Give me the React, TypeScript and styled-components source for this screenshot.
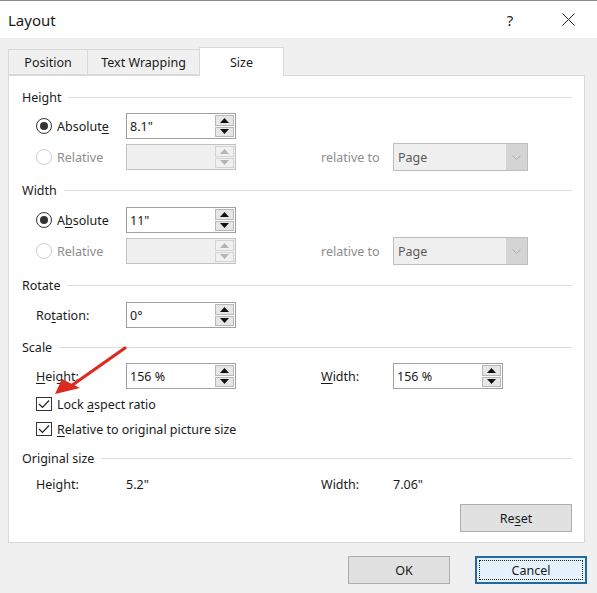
import React from "react";
import styled, { createGlobalStyle } from "styled-components";

const Global = createGlobalStyle`
  html, body { margin: 0; padding: 0; background: #f0f0f0; }
  body { font-family: "Noto Sans", "Open Sans", sans-serif; font-size: 12.5px; color: #1a1a1a; }
  * { box-sizing: border-box; }
`;

const Dialog = styled.div`
  width: 597px;
  height: 593px;
  display: flex;
  flex-direction: column;
  background: #f0f0f0;
  position: relative;
  overflow: hidden;
  border-top: 1px solid #8a8a8a;
`;

const TitleBar = styled.div`
  height: 37px;
  background: #ffffff;
  display: flex;
  align-items: center;
  padding-left: 8px;
`;

const Title = styled.div`
  flex: 1;
  font-size: 15px;
  color: #1a1a1a;
`;

const TitleBtn = styled.div`
  width: 58px;
  height: 37px;
  display: flex;
  align-items: center;
  justify-content: center;
  font-size: 15px;
  color: #222;
`;

const Body = styled.div`
  padding: 9px 12px 0 8px;
  display: flex;
  flex-direction: column;
`;

const TabRow = styled.div`
  display: flex;
  align-items: flex-end;
  height: 28px;
  padding-left: 1px;
`;

const Tab = styled.div<{ $w: number; $active?: boolean }>`
  width: ${(p) => p.$w}px;
  height: ${(p) => (p.$active ? 29 : 26)}px;
  margin-bottom: ${(p) => (p.$active ? -1 : 0)}px;
  background: ${(p) => (p.$active ? "#ffffff" : "#f0f0f0")};
  border: 1px solid #d9d9d9;
  border-bottom: ${(p) => (p.$active ? "none" : "1px solid #d9d9d9")};
  margin-left: -1px;
  display: flex;
  align-items: center;
  justify-content: center;
  font-size: 12.5px;
  color: #1a1a1a;
  position: relative;
  z-index: ${(p) => (p.$active ? 2 : 1)};
`;

const Panel = styled.div`
  position: relative;
  width: 577px;
  height: 468px;
  background: #ffffff;
  border: 1px solid #d9d9d9;
  padding: 11px 12px 0 13px;
  display: flex;
  flex-direction: column;
`;

const Header = styled.div<{ $mt: number }>`
  display: flex;
  align-items: center;
  height: 20px;
  margin-top: ${(p) => p.$mt}px;
  font-size: 12.5px;
  color: #1a1a1a;
  &::after {
    content: "";
    flex: 1;
    height: 1px;
    background: #dcdcdc;
    margin-left: 7px;
  }
`;

const Row = styled.div<{ $mt: number; $h?: number }>`
  display: grid;
  grid-template-columns: 90px 110px 85px 72px 135px;
  align-items: center;
  height: ${(p) => p.$h ?? 28}px;
  margin-top: ${(p) => p.$mt}px;
  padding-left: 14px;
`;

const Label = styled.span<{ $disabled?: boolean }>`
  color: ${(p) => (p.$disabled ? "#8c8c8c" : "#1a1a1a")};
  font-size: 12.5px;
  white-space: nowrap;
`;

const U = styled.span`
  text-decoration: underline;
  text-underline-offset: 2px;
`;

const RadioWrap = styled.div`
  display: flex;
  align-items: center;
  gap: 5px;
`;

const RadioCircle = styled.span<{ $checked?: boolean; $disabled?: boolean }>`
  width: 16px;
  height: 16px;
  border-radius: 50%;
  border: 1px solid ${(p) => (p.$disabled ? "#cfcfcf" : "#333")};
  display: flex;
  align-items: center;
  justify-content: center;
  background: #fff;
  &::after {
    content: "";
    display: ${(p) => (p.$checked ? "block" : "none")};
    width: 8px;
    height: 8px;
    border-radius: 50%;
    background: #333;
  }
`;

const SpinBox = styled.div<{ $disabled?: boolean }>`
  width: 110px;
  height: 26px;
  border: 1px solid ${(p) => (p.$disabled ? "#c2c2c2" : "#a0a0a0")};
  background: ${(p) => (p.$disabled ? "#f0f0f0" : "#ffffff")};
  display: flex;
  align-items: stretch;
`;

const SpinValue = styled.div`
  flex: 1;
  display: flex;
  align-items: center;
  padding-left: 3px;
  font-size: 12.5px;
  color: #1a1a1a;
`;

const SpinCol = styled.div`
  width: 20px;
  display: flex;
  flex-direction: column;
  gap: 1px;
  padding: 1px 1px 1px 0;
`;

const SpinBtn = styled.div<{ $disabled?: boolean }>`
  flex: 1;
  background: ${(p) => (p.$disabled ? "#f0f0f0" : "#e6e6e6")};
  border: 1px solid ${(p) => (p.$disabled ? "#d4d4d4" : "#b8b8b8")};
  display: flex;
  align-items: center;
  justify-content: center;
`;

const Select = styled.div`
  width: 135px;
  height: 28px;
  border: 1px solid #bdbdbd;
  background: #f0eff0;
  display: flex;
  align-items: stretch;
`;

const SelectValue = styled.div`
  flex: 1;
  display: flex;
  align-items: center;
  padding-left: 4px;
  color: #5a5a5a;
  font-size: 12.5px;
`;

const SelectBtn = styled.div`
  width: 21px;
  background: #d4d4d4;
  display: flex;
  align-items: center;
  justify-content: center;
`;

const CheckRow = styled.div<{ $mt: number }>`
  display: flex;
  align-items: center;
  gap: 5px;
  height: 20px;
  margin-top: ${(p) => p.$mt}px;
  padding-left: 14px;
`;

const CheckBox = styled.span`
  width: 16px;
  height: 14px;
  border: 1px solid #333;
  background: #fff;
  display: flex;
  align-items: center;
  justify-content: center;
`;

const Value = styled.span`
  font-size: 12.5px;
  color: #1a1a1a;
`;

const ResetRow = styled.div`
  display: flex;
  justify-content: flex-end;
  margin-top: 10px;
`;

const Button = styled.div<{ $w: number; $focus?: boolean; $shift?: number }>`
  width: ${(p) => p.$w}px;
  height: 28px;
  background: ${(p) => (p.$focus ? "#e5f1fb" : "#e1e1e1")};
  border: ${(p) => (p.$focus ? "2px solid #1f6aa5" : "1px solid #adadad")};
  display: flex;
  align-items: center;
  justify-content: center;
  padding-left: ${(p) => p.$shift ?? 0}px;
  font-size: 12.5px;
  color: #1a1a1a;
  position: relative;
`;

const FocusRing = styled.span`
  position: absolute;
  inset: 2px;
  border: 1px dotted #222;
`;

const Footer = styled.div`
  display: flex;
  justify-content: flex-end;
  gap: 25px;
  padding: 13px 10px 0 0;
`;

const ArrowOverlay = styled.svg`
  position: absolute;
  left: 0;
  top: 0;
  pointer-events: none;
`;

const Tri = ({ up, color }: { up: boolean; color: string }) => (
  <svg width="9" height="5" viewBox="0 0 9 5">
    {up ? <polygon points="0,5 9,5 4.5,0" fill={color} /> : <polygon points="0,0 9,0 4.5,5" fill={color} />}
  </svg>
);

const Spin = ({ value, disabled }: { value?: string; disabled?: boolean }) => {
  const c = disabled ? "#b4b4b4" : "#111";
  return (
    <SpinBox $disabled={disabled}>
      <SpinValue>{value}</SpinValue>
      <SpinCol>
        <SpinBtn $disabled={disabled}>
          <Tri up color={c} />
        </SpinBtn>
        <SpinBtn $disabled={disabled}>
          <Tri up={false} color={c} />
        </SpinBtn>
      </SpinCol>
    </SpinBox>
  );
};

const Dropdown = () => (
  <Select>
    <SelectValue>Page</SelectValue>
    <SelectBtn>
      <svg width="9" height="5" viewBox="0 0 9 5">
        <polyline points="0.5,0.5 4.5,4.5 8.5,0.5" fill="none" stroke="#b0b0b0" strokeWidth="1" />
      </svg>
    </SelectBtn>
  </Select>
);

const Radio = ({ checked, disabled, children }: { checked?: boolean; disabled?: boolean; children: React.ReactNode }) => (
  <RadioWrap>
    <RadioCircle $checked={checked} $disabled={disabled} />
    <Label $disabled={disabled}>{children}</Label>
  </RadioWrap>
);

const Check = ({ children, mt }: { children: React.ReactNode; mt: number }) => (
  <CheckRow $mt={mt}>
    <CheckBox>
      <svg width="12" height="10" viewBox="0 0 12 10">
        <polyline points="1,5 4.5,8.5 11,1.5" fill="none" stroke="#222" strokeWidth="1.2" />
      </svg>
    </CheckBox>
    <Label>{children}</Label>
  </CheckRow>
);

const Empty = () => <span />;

export default function App() {
  return (
    <>
      <Global />
      <Dialog>
        <TitleBar>
          <Title>Layout</Title>
          <TitleBtn>?</TitleBtn>
          <TitleBtn>
            <svg width="13" height="13" viewBox="0 0 13 13">
              <line x1="0.5" y1="0.5" x2="12.5" y2="12.5" stroke="#222" strokeWidth="1" />
              <line x1="12.5" y1="0.5" x2="0.5" y2="12.5" stroke="#222" strokeWidth="1" />
            </svg>
          </TitleBtn>
        </TitleBar>
        <Body>
          <TabRow>
            <Tab $w={80}>Position</Tab>
            <Tab $w={113}>Text Wrapping</Tab>
            <Tab $w={85} $active>
              Size
            </Tab>
          </TabRow>
          <Panel>
            <Header $mt={0}>Height</Header>
            <Row $mt={5}>
              <Radio checked>
                Absolut<U>e</U>
              </Radio>
              <Spin value={'8.1"'} />
            </Row>
            <Row $mt={3}>
              <Radio disabled>Relative</Radio>
              <Spin disabled />
              <Empty />
              <Label $disabled>relative to</Label>
              <Dropdown />
            </Row>
            <Header $mt={9}>Width</Header>
            <Row $mt={6}>
              <Radio checked>
                A<U>b</U>solute
              </Radio>
              <Spin value={'11"'} />
            </Row>
            <Row $mt={3}>
              <Radio disabled>Relative</Radio>
              <Spin disabled />
              <Empty />
              <Label $disabled>relative to</Label>
              <Dropdown />
            </Row>
            <Header $mt={10}>Rotate</Header>
            <Row $mt={6}>
              <Label>
                Ro<U>t</U>ation:
              </Label>
              <Spin value="0°" />
            </Row>
            <Header $mt={8}>Scale</Header>
            <Row $mt={5}>
              <Label>
                <U>H</U>eight:
              </Label>
              <Spin value="156 %" />
              <Empty />
              <Label>
                <U>W</U>idth:
              </Label>
              <Spin value="156 %" />
            </Row>
            <Check mt={4}>
              Lock <U>a</U>spect ratio
            </Check>
            <Check mt={5}>
              <U>R</U>elative to original picture size
            </Check>
            <Header $mt={9}>Original size</Header>
            <Row $mt={6} $h={20}>
              <Label>Height:</Label>
              <Value>5.2"</Value>
              <Empty />
              <Label>Width:</Label>
              <Value>7.06"</Value>
            </Row>
            <ResetRow>
              <Button $w={112}>
                Re<U>s</U>et
              </Button>
            </ResetRow>
            <ArrowOverlay width="577" height="468" viewBox="0 0 577 468">
              <line x1="116" y1="272" x2="62" y2="310" stroke="#dc2a1f" strokeWidth="3.2" strokeLinecap="round" />
              <polygon points="46,318 53,303 71,312" fill="#dc2a1f" />
            </ArrowOverlay>
          </Panel>
        </Body>
        <Footer>
          <Button $w={102} $shift={10}>
            OK
          </Button>
          <Button $w={112} $focus>
            <FocusRing />
            Cancel
          </Button>
        </Footer>
      </Dialog>
    </>
  );
}
